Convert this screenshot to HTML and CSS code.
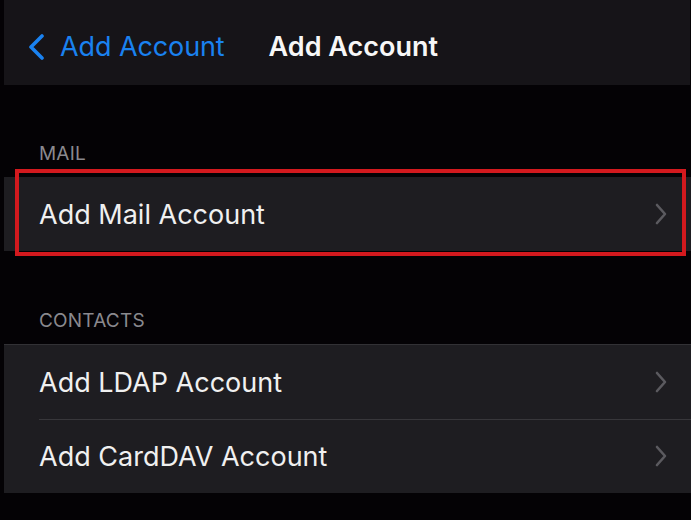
FILE: index.html
```html
<!DOCTYPE html>
<html lang="en">
<head>
<meta charset="utf-8">
<title>Add Account</title>
<link rel="stylesheet" href="styles.css">
</head>
<body>
<div class="screen">
  <header class="navbar">
    <a class="back">
      <svg class="back-chevron" width="18" height="26" viewBox="0 0 18 26"><path d="M15 2 L4 13 L15 24" fill="none" stroke="#1a82f0" stroke-width="3.6" stroke-linecap="round" stroke-linejoin="round"/></svg>
      <span class="back-label">Add Account</span>
    </a>
    <h1 class="title">Add Account</h1>
  </header>

  <section class="section section-mail">
    <div class="section-header">MAIL</div>
    <div class="group">
      <div class="row">
        <span class="row-label">Add Mail Account</span>
        <svg class="chevron" width="12" height="22" viewBox="0 0 12 22"><path d="M2 2 L10 11 L2 20" fill="none" stroke="#5b5a5f" stroke-width="2.6" stroke-linecap="round" stroke-linejoin="round"/></svg>
      </div>
    </div>
    <div class="highlight"></div>
  </section>

  <section class="section section-contacts">
    <div class="section-header">CONTACTS</div>
    <div class="group group-bordered">
      <div class="row">
        <span class="row-label">Add LDAP Account</span>
        <svg class="chevron" width="12" height="22" viewBox="0 0 12 22"><path d="M2 2 L10 11 L2 20" fill="none" stroke="#5b5a5f" stroke-width="2.6" stroke-linecap="round" stroke-linejoin="round"/></svg>
      </div>
      <div class="row row-sep">
        <span class="row-label">Add CardDAV Account</span>
        <svg class="chevron" width="12" height="22" viewBox="0 0 12 22"><path d="M2 2 L10 11 L2 20" fill="none" stroke="#5b5a5f" stroke-width="2.6" stroke-linecap="round" stroke-linejoin="round"/></svg>
      </div>
    </div>
  </section>
</div>
</body>
</html>
```

FILE: styles.css
```css
html, body {
  margin: 0;
  padding: 0;
  background: #040205;
}
body {
  font-family: Inter, "Liberation Sans", sans-serif;
  color: #f2f2f2;
  width: 691px;
  height: 520px;
  overflow: hidden;
}
.screen {
  margin-left: 4px;
  width: 687px;
}
.navbar {
  height: 85px;
  width: 686px;
  background: #161418;
  display: flex;
  align-items: center;
  box-sizing: border-box;
  padding-left: 23px;
  padding-top: 8px;
}
.back {
  display: flex;
  align-items: center;
  color: #1a82f0;
}
.back-chevron {
  display: block;
  margin-top: 1px;
}
.back-label {
  margin-left: 15px;
  font-size: 27px;
  letter-spacing: -0.1px;
}
.title {
  margin: 0 0 0 44px;
  font-size: 27px;
  font-weight: 600;
  color: #f7f7f7;
}
.section {
  position: relative;
}
.section-header {
  font-size: 19px;
  line-height: 24px;
  color: #8a898e;
  padding-left: 35px;
  letter-spacing: 0.2px;
}
.section-mail .section-header {
  padding-top: 57px;
  padding-bottom: 11px;
}
.section-contacts .section-header {
  padding-top: 58px;
  padding-bottom: 11px;
}
.group {
  background: #1e1d21;
}
.group-bordered {
  border-top: 1px solid #323135;
}
.row {
  height: 74px;
  display: flex;
  align-items: center;
  justify-content: space-between;
  padding-left: 35px;
  padding-right: 24px;
  position: relative;
}
.row-sep::before {
  content: "";
  position: absolute;
  left: 35px;
  right: 0;
  top: 0;
  height: 1px;
  background: #38373b;
}
.row-label {
  font-size: 27px;
  color: #f0f0f0;
}
.chevron {
  display: block;
}
.highlight {
  position: absolute;
  left: 11px;
  top: 84px;
  width: 671px;
  height: 87px;
  box-sizing: border-box;
  border: 4px solid #d3191e;
  pointer-events: none;
}
```
